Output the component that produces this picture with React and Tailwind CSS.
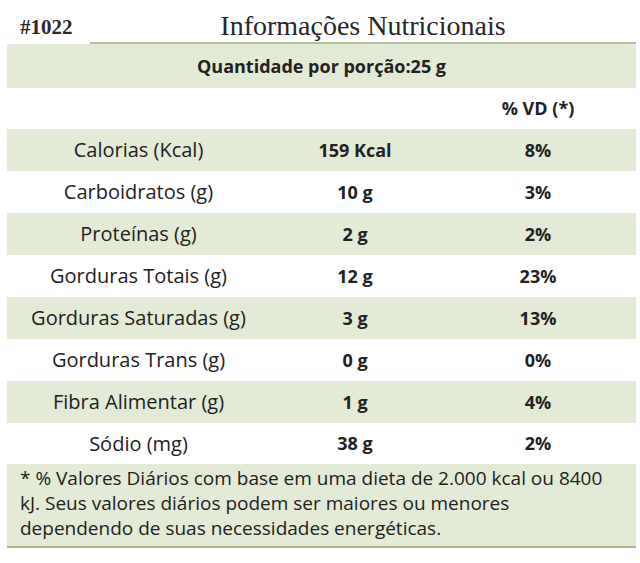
const rows = [
  ['Calorias (Kcal)', '159 Kcal', '8%'],
  ['Carboidratos (g)', '10 g', '3%'],
  ['Proteínas (g)', '2 g', '2%'],
  ['Gorduras Totais (g)', '12 g', '23%'],
  ['Gorduras Saturadas (g)', '3 g', '13%'],
  ['Gorduras Trans (g)', '0 g', '0%'],
  ['Fibra Alimentar (g)', '1 g', '4%'],
  ['Sódio (mg)', '38 g', '2%'],
]

function Row({ label, value, vd, shaded, h = 'h-[42px]' }) {
  return (
    <div className={`grid grid-cols-[263px_170px_1fr] items-center ${h} ${shaded ? 'bg-[#e3ead5]' : 'bg-white'}`}>
      <div className="text-center text-[20px]">{label}</div>
      <div className="text-center font-bold">{value}</div>
      <div className="text-center font-bold">{vd}</div>
    </div>
  )
}

export default function App() {
  return (
    <div className="w-[640px] h-[563px] bg-white text-[#222] text-[18px] font-['Open_Sans',sans-serif]">
      <div className="flex items-end h-[44px] pl-[20px]">
        <div className="w-[70px] pb-[6px] font-['Liberation_Serif',serif] font-bold text-[21px] leading-none text-[#2a2a2a]">#1022</div>
        <div className="flex-1 h-[44px] flex items-end justify-center border-b-2 border-[#b2c095] mr-[4px]">
          <span className="font-['Liberation_Serif',serif] text-[28px] leading-none pb-[2px] text-[#262626]">
            Informações Nutricionais
          </span>
        </div>
      </div>

      <div className="mx-[7px] mr-[4px]">
        <div className="h-[44px] bg-[#e3ead5] flex items-center justify-center font-bold">
          Quantidade por porção:25 g
        </div>
        <Row label="" value="" vd="% VD (*)" h="h-[41px]" />
        {rows.map((r, i) => (
          <Row
            key={r[0]}
            label={r[0]}
            value={r[1]}
            vd={r[2]}
            shaded={i % 2 === 0}
            h={i === rows.length - 1 ? 'h-[41px]' : 'h-[42px]'}
          />
        ))}
        <div className="h-[84px] bg-[#e3ead5] border-b-2 border-[#a9b78b] pl-[13px] pt-[2px] leading-[25px] text-[19px] whitespace-nowrap">
          * % Valores Diários com base em uma dieta de 2.000 kcal ou 8400
          <br />
          kJ. Seus valores diários podem ser maiores ou menores
          <br />
          dependendo de suas necessidades energéticas.
        </div>
      </div>
    </div>
  )
}
